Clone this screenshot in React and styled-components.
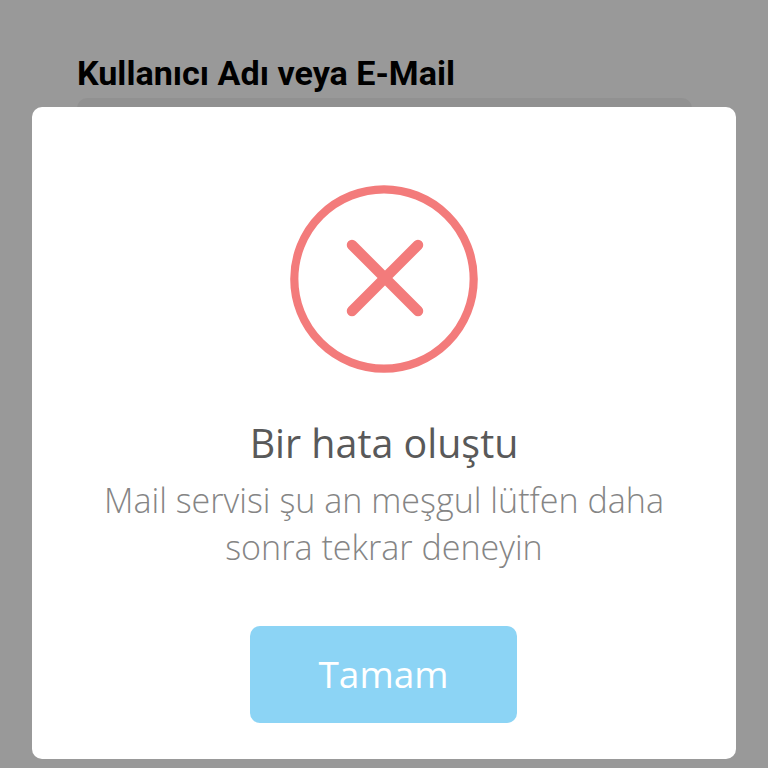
import { createGlobalStyle } from "styled-components";
import styled from "styled-components";

const GlobalStyle = createGlobalStyle`
    html, body {
        margin: 0;
        padding: 0;
        height: 100%;
        background-color: #ffffff;
    }

    #root {
        height: 100%;
    }
`

const Page = styled.div`
    position: relative;
    width: 768px;
    height: 768px;
    overflow: hidden;
`

const LoginForm = styled.form`
    display: flex;
    flex-direction: column;
    gap: 5px;
    padding: 54px 76px 0 77px;
`

const FieldLabel = styled.label`
    font-family: Roboto, "Liberation Sans", sans-serif;
    font-size: 34.1px;
    line-height: 39px;
    font-weight: 700;
    color: #000000;
`

const FieldInput = styled.div`
    height: 80px;
    border-radius: 10px;
    background-color: #f2f2f2;
`

const Overlay = styled.div`
    position: absolute;
    inset: 0;
    display: flex;
    justify-content: center;
    padding-top: 107px;
    background-color: rgba(0, 0, 0, 0.4);
`

const Modal = styled.div`
    display: flex;
    flex-direction: column;
    align-items: center;
    box-sizing: border-box;
    width: 704px;
    height: 652px;
    padding-top: 78px;
    border-radius: 10px;
    background-color: #ffffff;
    font-family: "Open Sans", "Liberation Sans", sans-serif;
    text-align: center;
`

const ErrorIcon = styled.svg`
    display: block;
    width: 188px;
    height: 188px;
    color: #f37b7b;
`

const Title = styled.h2`
    margin: 45px 0 0;
    font-size: 39.4px;
    line-height: 50px;
    font-weight: 400;
    color: #595959;
`

const Message = styled.p`
    width: 600px;
    margin: 9px 0 0;
    font-size: 34.1px;
    line-height: 47px;
    font-weight: 300;
    color: #858585;
`

const ConfirmButton = styled.button`
    width: 267px;
    height: 97px;
    margin: 55px 1px 0 0;
    padding: 0 0 2px;
    border: 0;
    border-radius: 10px;
    background-color: #8cd4f5;
    color: #ffffff;
    font-family: inherit;
    font-size: 37px;
    font-weight: 400;
`

const App = () => {
    return (
        <Page>
            <GlobalStyle />
            <LoginForm>
                <FieldLabel>Kullanıcı Adı veya E-Mail</FieldLabel>
                <FieldInput />
            </LoginForm>
            <Overlay>
                <Modal>
                    <ErrorIcon viewBox="0 0 188 188" fill="none" stroke="currentColor">
                        <circle cx="94" cy="94" r="89.7" strokeWidth="8.2" />
                        <path d="M62 60L128 126M128 60L62 126" strokeWidth="10.5" strokeLinecap="round" />
                    </ErrorIcon>
                    <Title>Bir hata oluştu</Title>
                    <Message>Mail servisi şu an meşgul lütfen daha sonra tekrar deneyin</Message>
                    <ConfirmButton type="button">Tamam</ConfirmButton>
                </Modal>
            </Overlay>
        </Page>
    );
};
export default App;
